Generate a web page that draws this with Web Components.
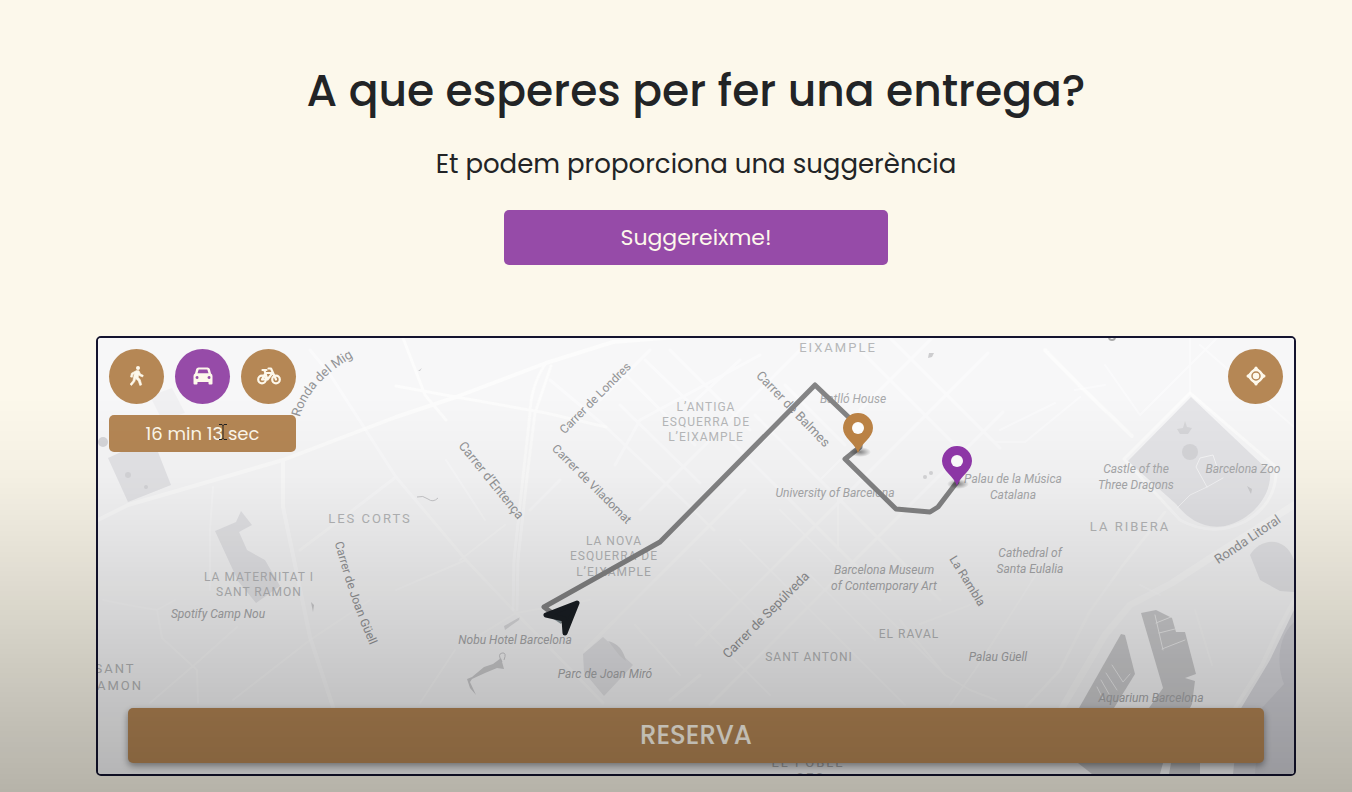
<!DOCTYPE html>
<html lang="ca">
<head>
<meta charset="utf-8">
<meta name="viewport" content="width=device-width, initial-scale=1">
<title>Fer una entrega</title>
<style>
  html, body { margin: 0; min-height: 100%; background: #fcf8eb; }
  body { font-family: Poppins, Inter, sans-serif; color: #222426; overflow: hidden; }
</style>
</head>
<body>
<delivery-page></delivery-page>

<script>
const define = (name, html, setup) => {
  const template = document.createElement('template');
  template.innerHTML = html;
  customElements.define(name, class extends HTMLElement {
    constructor() {
      super();
      this.attachShadow({ mode: 'open' }).append(template.content.cloneNode(true));
    }
    connectedCallback() { if (setup) setup(this, this.shadowRoot); }
  });
};

/* Rounded rectangular button; colours and size come from custom properties */
define('action-button', `
  <style>
    :host { display: block; }
    button {
      display: block; width: 100%; height: 55px; padding: 0; border: 0; border-radius: 5px;
      background: var(--button-bg, #b58755); color: #fdf8eb; font: inherit; cursor: pointer;
      box-shadow: var(--button-shadow, none);
    }
  </style>
  <button type="button"><slot></slot></button>`);

define('round-button', `
  <style>
    :host { display: block; }
    button {
      display: grid; place-items: center; width: 55px; height: 55px; padding: 0 0 2px;
      border: 0; border-radius: 50%; background: #b58755; color: #fdf8eb; cursor: pointer;
    }
    :host([active]) button { background: #964ba8; }
  </style>
  <button type="button"><slot></slot></button>`,
  (host, root) => {
    root.querySelector('button').setAttribute('aria-label', host.getAttribute('label'));
  });

define('page-intro', `
  <style>
    :host { display: flex; flex-direction: column; align-items: center; text-align: center; }
    h1 { margin: 0; font-size: 44px; line-height: 62px; font-weight: 500; }
    p { margin: 22px 0 26px; font-size: 26px; line-height: 40px; }
    action-button { width: 384px; max-width: 100%; font-size: 22px; --button-bg: #964ba8; }
  </style>
  <h1><slot name="title"></slot></h1>
  <p><slot name="lead"></slot></p>
  <action-button><slot name="action"></slot></action-button>`);

/* Street map drawn on its own coordinate canvas */
define('city-map', `
  <style>
    :host { display: block; min-height: 0; }
    svg { display: block; width: 100%; height: 100%; }
    text { font-family: Roboto, sans-serif; font-size: 12px; text-anchor: middle; fill: #aeafb1; }
    .area { letter-spacing: 1px; fill: #b6b7b9; }
    .wide { letter-spacing: 2px; font-size: 13px; }
    .place { font-style: italic; fill: #a8a9ab; }
    .street { fill: #939496; }
    .major { font-size: 13px; }
    .roads path { fill: none; stroke: #fff; stroke-linejoin: round; stroke-linecap: round; }
  </style>
  <svg viewBox="98 338 1196 436" preserveAspectRatio="xMidYMid slice" role="img" aria-label="Mapa de Barcelona">
    <defs>
      <path id="mig" d="M300 417 C305 398 320 376 353 357"/>
      <path id="guell" d="M333 536 C342 570 352 606 373 652"/>
      <radialGradient id="shade"><stop stop-opacity=".45"/><stop offset="1" stop-opacity="0"/></radialGradient>
    </defs>
    <rect x="98" y="338" width="1196" height="436" fill="#f7f7f8"/>
    <g fill="#e5e5e8">
      <path d="M108 458 L121 452 H158 L171 485 128 502Z"/>
      <path d="M150 396 L172 388 185 413 162 420Z" opacity=".4"/>
      <path d="M215 531 L236 522 241 511 252 525 239 532 247 550 265 560 280 586 256 603 238 581Z"/>
      <path d="M1191 397 L1270 472 C1272 495 1252 520 1225 526 C1200 530 1185 515 1176 504 L1128 461Z"/>
      <path d="M603 637 L633 665 604 696 584 672 583 654Z"/>
      <path d="M1250 555 C1260 538 1285 535 1294 560 V592 L1280 591 1260 580Z"/>
      <path d="M1294 610 L1270 660 1240 710 1233 774 H1294Z" fill="#dcdce1"/>
      <path d="M1294 622 C1275 640 1278 670 1284 684 L1260 710 1255 774 H1294Z" fill="#d2d2d8"/>
    </g>
    <g fill="#cdcdcf">
      <path d="M1121 634 L1125 635 1135 674 1114 708 H1079Z"/>
      <path d="M1141 613 L1156 610 1172 618 1176 632 1185 632 1196 674 1185 678 1195 681 1192 704 1190 708 H1149 L1163 688Z"/>
      <path d="M1078 763 H1163 L1160 774 H1092Z M1171 763 H1200 V774 H1169Z"/>
      <path d="M467 679 L472 677 484 667 493 664 501 658 504 669 497 668 485 673 472 679 470 682 476 695 470 688Z"/>
      <path d="M417 497 Q423 495 428 499 T438 498" fill="none" stroke="#c8c8cb" stroke-width="1"/>
      <path d="M502 662 Q497 654 502 653 T504 660" fill="none" stroke="#c8c8cb" stroke-width="1"/>
      <path d="M504 626 L520 617 519 620 505 630Z M608 641 Q622 644 626 661 L620 656Z" fill="#dcdcdf"/>
      <g fill="#d6d6d9">
        <circle cx="1190" cy="452" r="8"/><circle cx="128" cy="475" r="3"/><circle cx="103" cy="442" r="5"/>
        <circle cx="146" cy="487" r="2"/><circle cx="925" cy="477" r="2"/><circle cx="931" cy="473" r="2"/>
        <path d="M1185 421 L1187 427 1192 428 1188 434 H1180 L1177 429 1183 428Z"/>
      </g>
      <path d="M929 353 L934 353 932 357 928 358Z M418 371 L422 368 420 371Z"/>
      <path d="M311 602 L314 605 313 612Z M1247 486 L1252 489 1251 494Z"/>
      <circle cx="1112" cy="337" r="3" fill="none" stroke="#aaa" stroke-width="2"/>
    </g>
    <g class="roads">
      <g opacity=".6">
        <path stroke-width="4" d="M98 520 L128 505 180 490 283 460 396 417 456 397 546 363 613 342 690 336"/>
        <path stroke-width="4" d="M283 460 V507 L293 555 310 637 333 707"/>
        <path stroke-width="3" d="M403 338 L425 395 446 420 M396 386 L456 397 546 413 606 427"/>
        <path stroke-width="3" d="M546 363 Q531 385 530 413 L523 477 514 560 513 610 M551 366 L535 413 527 477 518 560 517 610"/>
        <path stroke-width="3" d="M1124 459 L1190 393 1276 467 Q1278 502 1246 521 Q1213 538 1180 520 L1124 459"/>
        <path stroke-width="7" d="M1294 505 L1215 555 1172 583 1130 605 1105 635 1062 708" opacity=".8"/>
        <path stroke-width="4" d="M1045 350 L1082 388 1132 436"/>
        <path stroke-width="3" d="M1090 611 L1060 670 1025 708 M1090 611 L1123 565 1165 512" opacity=".6"/>
        <path stroke-width="4" d="M1294 600 L1278 630 1262 665 1235 708" opacity=".8"/>
      </g>
      <g opacity=".4">
        <path stroke-width="2" d="M213 487 L210 530 V590 M103 600 L128 605 157 610 162 638 197 670 198 703 M157 610 L175 600 M237 627 L200 660 150 703 M233 700 L310 640 370 600"/>
        <path stroke-width="3" d="M329 373 L396 477 466 560 516 613 603 703 M310 350 L329 373 M396 477 L340 520 300 550"/>
        <path stroke-width="2" d="M446 460 L485 520 M460 560 L505 525 M396 590 L466 560 M480 635 L516 613 590 600 M455 650 L420 703"/>
        <path stroke-width="3" d="M606 427 L686 503 714 530 M620 405 L700 483 M550 380 L606 427 M615 465 L640 420 760 355 M560 480 L530 510"/>
        <path stroke-width="3" d="M623 372 L695 445 M645 360 L694 407 M670 350 L750 430 M730 440 L865 575 M755 415 L940 600 M785 385 L845 445 M855 345 L960 450 M890 338 L1000 448"/>
        <path stroke-width="3" d="M585 650 L745 490 M600 400 L650 350 M640 510 L815 335 M696 400 L740 360 M696 645 L885 456 988 353 M710 705 L875 540 1003 412 M860 410 L940 330 M670 700 L700 675"/>
        <path stroke-width="2" d="M740 540 L905 705 M700 560 L760 620 M780 510 L945 675 M820 480 L840 460 M810 575 L875 640 M635 625 L680 675 M690 615 L770 695"/>
        <path stroke-width="2" d="M838 550 V495 M900 620 L945 675 970 690 996 700 M920 624 L970 605 M950 705 L975 670 1020 600 1045 560"/>
        <path stroke-width="2" d="M996 442 H1025 L1080 397 M1000 430 L1055 403 M1105 365 L1140 415 1225 330 M1075 390 L1105 385 M1190 393 V338 M1140 585 L1160 595 M1200 345 L1294 427 M1195 610 L1212 665"/>
      </g>
      <g opacity=".65">
        <path stroke-width="1" d="M1177 508 L1190 495 1207 487 1223 478 M1207 487 L1196 467 1200 458 1213 455 1218 470 M1156 623 L1171 617 M1159 633 L1175 629 M1162 649 L1185 640 M1155 615 L1163 650"/>
        <path stroke-width="1" d="M1112 665 L1123 682 1130 674 M1106 673 L1117 690 M1101 680 L1109 694 M1097 687 L1103 699"/>
      </g>
    </g>
    <g id="labels"></g>
    <path d="M564 622 L544 607 660 542 815 385 861 429 860 447 845 459 896 509 930 512 938 507 957 482"
      fill="none" stroke="#848485" stroke-width="5" stroke-linejoin="round" stroke-linecap="round"/>
    <path d="M552 618 L563 610 561 624Z" fill="#8b989d"/>
    <path d="M577 603 L546 615 564 619 565 633Z" fill="#1a1f24" stroke="#1a1f24" stroke-width="5" stroke-linejoin="round"/>
    <ellipse cx="860" cy="452" rx="11" ry="5" fill="url(#shade)"/>
    <ellipse cx="958" cy="484" rx="11" ry="5" fill="url(#shade)"/>
    <path fill="#bd8446" d="M858 453 C855 443 843 438 843 428 A15 15 0 1 1 873 428 C873 438 861 443 858 453Z"/>
    <circle cx="858" cy="428" r="6" fill="#fff"/>
    <path fill="#9138ab" d="M957 486 C954 476 942 471 942 461 A15 15 0 1 1 972 461 C972 471 960 476 957 486Z"/>
    <circle cx="957" cy="461" r="6" fill="#fff"/>
  </svg>`,
  (host, root) => {
    /* kind, x of centre, baseline y, text, rotation */
    const labels = [
      ['area wide', 838, 352, 'EIXAMPLE'], ['area', 706, 411, 'L’ANTIGA'], ['area', 706, 426, 'ESQUERRA DE'],
      ['area', 706, 441, 'L’EIXAMPLE'], ['area wide', 370, 523, 'LES CORTS'], ['area', 614, 545, 'LA NOVA'],
      ['area', 614, 560, 'ESQUERRA DE'], ['area', 614, 576, 'L’EIXAMPLE'], ['area', 259, 581, 'LA MATERNITAT I'],
      ['area', 259, 596, 'SANT RAMON'], ['area wide', 115, 673, 'SANT'], ['area wide', 115, 690, 'RAMON'],
      ['area wide', 1130, 531, 'LA RIBERA'], ['area', 909, 638, 'EL RAVAL'], ['area', 809, 661, 'SANT ANTONI'],
      ['area wide', 808, 767, 'EL POBLE'], ['area wide', 811, 782, 'SEC'],
      ['place', 853, 403, 'Batlló House'], ['place', 835, 497, 'University of Barcelona'],
      ['place', 1013, 483, 'Palau de la Música'], ['place', 1013, 499, 'Catalana'],
      ['place', 1136, 473, 'Castle of the'], ['place', 1136, 489, 'Three Dragons'], ['place', 1243, 473, 'Barcelona Zoo'],
      ['place', 1030, 557, 'Cathedral of'], ['place', 1030, 573, 'Santa Eulalia'],
      ['place', 884, 574, 'Barcelona Museum'], ['place', 884, 590, 'of Contemporary Art'],
      ['place', 998, 661, 'Palau Güell'], ['place', 1151, 702, 'Aquarium Barcelona'],
      ['place', 218, 618, 'Spotify Camp Nou'], ['place', 515, 644, 'Nobu Hotel Barcelona'], ['place', 605, 678, 'Parc de Joan Miró'],
      ['street', 598, 401, 'Carrer de Londres', -45], ['street major', 488, 483, 'Carrer d’Entença', 51],
      ['street', 589, 487, 'Carrer de Viladomat', 45], ['street major', 790, 412, 'Carrer de Balmes', 46],
      ['street major', 769, 618, 'Carrer de Sepúlveda', -45], ['street', 964, 583, 'La Rambla', 58],
      ['street major', 1250, 543, 'Ronda Litoral', -34]
    ];
    const ns = 'http://www.w3.org/2000/svg';
    const group = root.querySelector('#labels');
    for (const [kind, x, y, content, angle] of labels) {
      const text = document.createElementNS(ns, 'text');
      text.setAttribute('class', kind);
      text.setAttribute('x', x);
      text.setAttribute('y', y);
      if (angle) text.setAttribute('transform', `rotate(${angle} ${x} ${y})`);
      text.textContent = content;
      group.append(text);
    }
    for (const [path, kind, content] of [['mig', 'street major', 'Ronda del Mig'], ['guell', 'street', 'Carrer de Joan Güell']]) {
      const text = document.createElementNS(ns, 'text');
      const run = document.createElementNS(ns, 'textPath');
      text.setAttribute('class', kind);
      run.setAttribute('href', '#' + path);
      run.setAttribute('startOffset', '50%');
      run.textContent = content;
      text.append(run);
      group.append(text);
    }
  });

define('time-badge', `
  <style>
    :host {
      display: block; position: relative; border-radius: 5px; background: #b58755; color: #fdf8eb;
      font-size: 18px; line-height: 37px; text-align: center;
    }
    svg { position: absolute; left: 59%; top: 9px; }
  </style>
  <slot></slot>
  <svg width="8" height="16" fill="none" stroke="#222" aria-hidden="true"><path d="M0 .5h3l1 1 1-1h3M4 1v14M0 15.500h3l1-1 1 1h3"/></svg>`);

define('route-planner', `
  <style>
    :host {
      display: grid; box-sizing: border-box; aspect-ratio: 30 / 11; border: 2px solid #14142f;
      border-radius: 5px; overflow: hidden;
    }
    city-map, .controls { grid-area: 1 / 1; }
    .controls {
      z-index: 1; display: flex; flex-direction: column; justify-content: space-between; padding: 11px;
    }
    .top { display: flex; justify-content: space-between; align-items: flex-start; }
    .travel { display: grid; gap: 11px; }
    .modes { display: flex; gap: 11px; }
    action-button { margin: 0 19px; font-size: 26px; font-weight: 500; --button-shadow: 0 3px 7px rgba(0, 0, 0, .4); }
    svg { display: block; fill: currentColor; }
  </style>
  <city-map></city-map>
  <div class="controls">
    <div class="top">
      <div class="travel">
        <div class="modes">
          <round-button label="A peu">
            <svg width="14" height="20" viewBox="0 0 14 20"><circle cx="8" cy="2" r="2"/><path stroke="currentColor" stroke-width=".6" d="M6.500 4.500 L9 4.800 10.500 8 13.300 9.300 12.600 11 9.500 9.700 8.800 8.800 8.200 11.200 10.300 13.800 11.700 18.800 9.800 19.500 8.300 15 5.700 12.600 4.800 15.500 1.500 19.500 0 18.200 2.900 14.800 4.300 7.500 3 8.500 2.300 11.300 .500 10.900 1.400 7.200Z"/></svg>
          </round-button>
          <round-button label="En cotxe" active>
            <svg width="20" height="18" viewBox="0 0 20 18"><path fill-rule="evenodd" d="M5.500 .5 H14.500 Q16.300 .5 16.800 2 L18 6.500 Q19.500 7.300 19.500 9 V16.500 Q19.500 17.500 18.500 17.500 H16.500 Q15.500 17.500 15.500 16.500 V15 H4.500 V16.500 Q4.500 17.500 3.500 17.500 H1.500 Q.5 17.500 .5 16.500 V9 Q.5 7.300 2 6.500 L3.200 2 Q3.700 .5 5.500 .5Z M5.700 2.500 L4.500 6.300 H15.500 L14.300 2.500Z M4 9 A1.500 1.500 0 1 0 4.010 12 A1.500 1.500 0 1 0 4 9Z M16 9 A1.500 1.500 0 1 0 16.010 12 A1.500 1.500 0 1 0 16 9Z"/></svg>
          </round-button>
          <round-button label="En bicicleta">
            <svg width="24" height="18" viewBox="0 0 24 18" stroke="currentColor" stroke-linejoin="round" stroke-linecap="round"><g fill="none" stroke-width="2.200"><circle cx="5" cy="12.500" r="3.800"/><circle cx="19" cy="12.500" r="3.800"/><path d="M5 12.500 L8.500 6 H15.500 L10.500 12.500 H5 M10.500 12.500 L7.500 3.500 M5.500 3 H9.500 M19 12.500 L14 1.500 H11.500"/></g></svg>
          </round-button>
        </div>
        <time-badge>16 min 13 sec</time-badge>
      </div>
      <round-button label="La meva ubicació">
        <svg width="20" height="20" viewBox="0 0 20 20"><path d="M10 2 L18 10 10 18 2 10Z" stroke="currentColor" stroke-width="2" stroke-linejoin="round"/><circle cx="10" cy="10" r="7"/><circle cx="10" cy="2" r="1.500"/><circle cx="18" cy="10" r="1.500"/><circle cx="10" cy="18" r="1.500"/><circle cx="2" cy="10" r="1.500"/><circle cx="10" cy="10" r="4" fill="none" stroke="#b58755" stroke-width="1.500"/></svg>
      </round-button>
    </div>
    <action-button><slot></slot></action-button>
  </div>`);

define('delivery-page', `
  <style>
    :host { display: block; box-sizing: border-box; min-height: 100vh; padding: 60px 56px 16px 96px; }
    route-planner { margin-top: 71px; }
    /* shade that deepens toward the bottom of the window */
    .shade {
      position: fixed; inset: 50% 0 0; z-index: 2; pointer-events: none;
      background: linear-gradient(rgba(0,0,0,0), rgba(0,0,0,.03) 20%, rgba(0,0,0,.09) 40%, rgba(0,0,0,.16) 62%, rgba(0,0,0,.23) 84%, rgba(0,0,0,.28));
    }
  </style>
  <main>
    <page-intro>
      <span slot="title">A que esperes per fer una entrega?</span>
      <span slot="lead">Et podem proporciona una suggerència</span>
      <span slot="action">Suggereixme!</span>
    </page-intro>
    <route-planner>RESERVA</route-planner>
  </main>
  <div class="shade"></div>`);
</script>
</body>
</html>
